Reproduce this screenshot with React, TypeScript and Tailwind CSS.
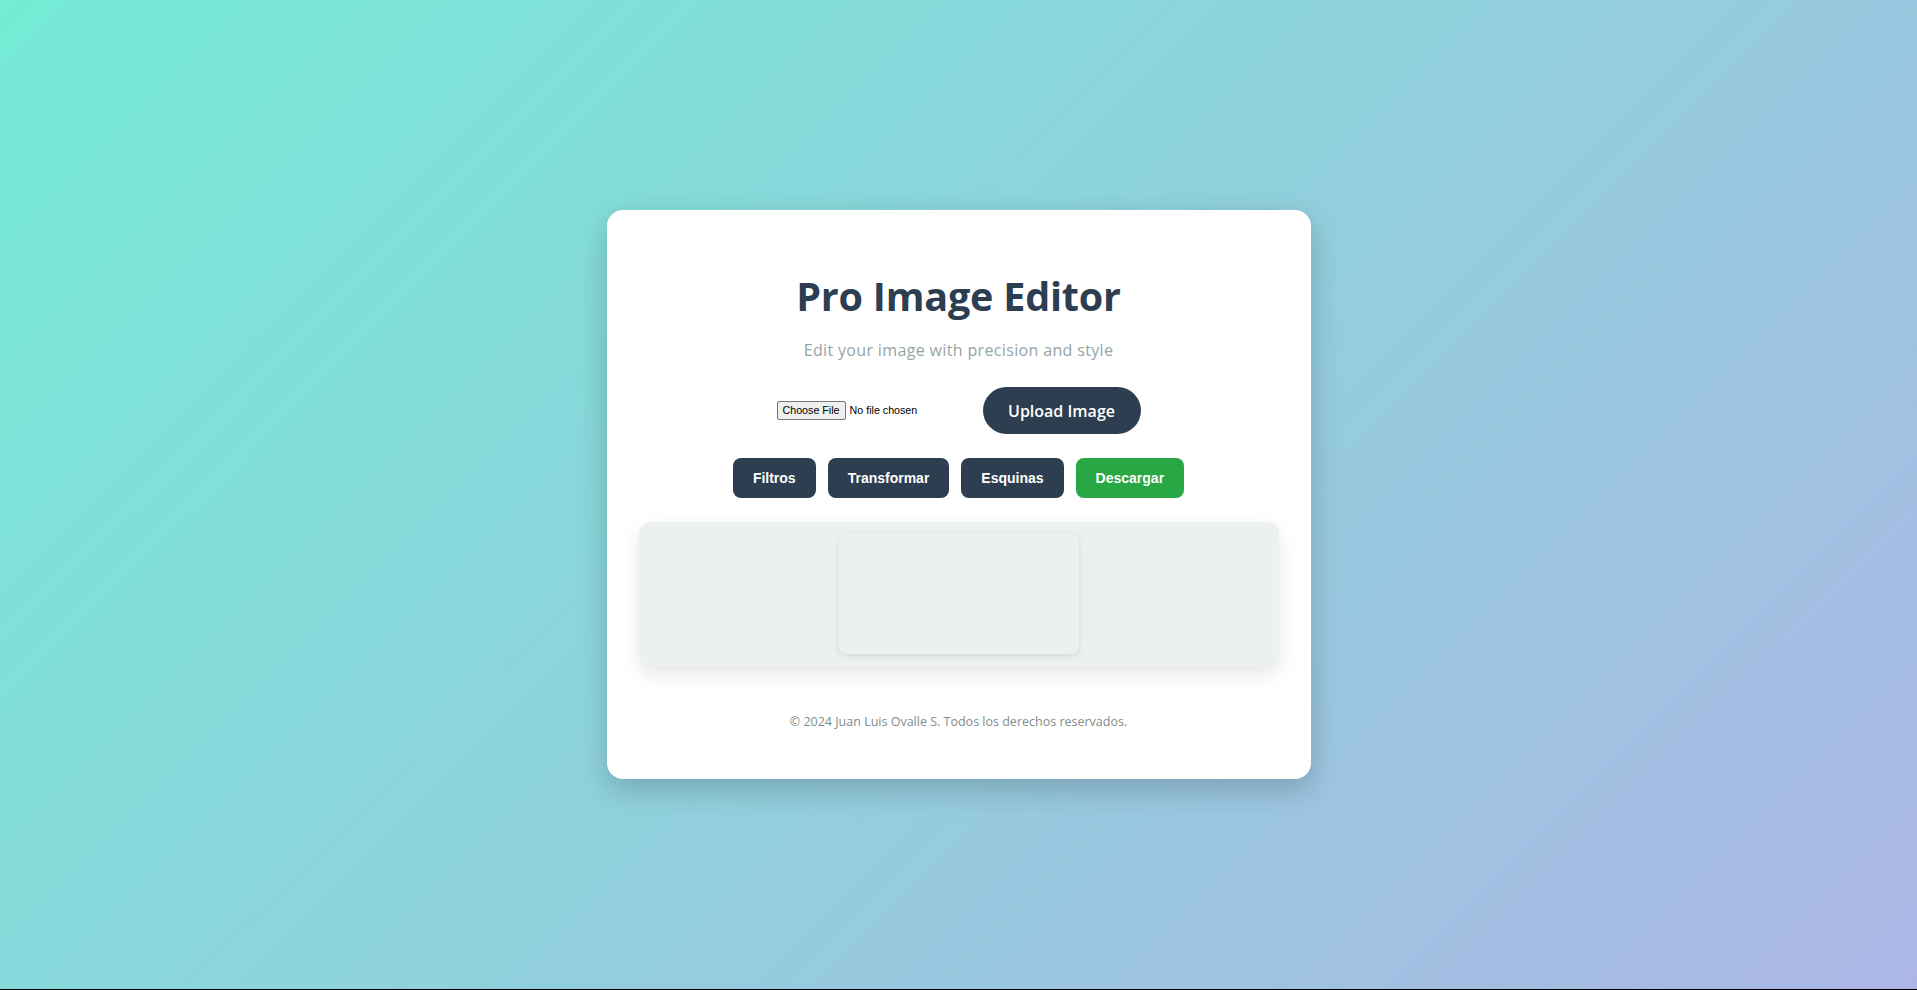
import React, { useState } from 'react';

const tools = ['Filtros', 'Transformar', 'Esquinas'];

export default function App() {
  const [fileName, setFileName] = useState<string | null>(null);

  return (
    <div className="h-[990px] bg-black">
      <div className="h-[989px] flex items-center justify-center bg-[linear-gradient(135deg,#74ebd5_0%,#acb6e5_100%)] font-['Open_Sans',sans-serif]">
        <div className="w-[704px] bg-white rounded-2xl p-8 text-center shadow-[0_10px_30px_rgba(0,0,0,0.2)]">
          {/* Header */}
          <h1 className="mt-[30px] text-[39.5px] leading-[48px] font-bold text-[#2c3e50] tracking-[-0.2px]">
            Pro Image Editor
          </h1>
          <p className="mt-[18px] text-[16px] leading-6 text-[#95a5a6] tracking-[0.35px]">
            Edit your image with precision and style
          </p>

          {/* Upload */}
          <div className="mt-[25px] flex items-center justify-center gap-5">
            <input
              type="file"
              accept="image/*"
              onChange={(e) => setFileName(e.target.files?.[0]?.name ?? null)}
              className="w-[186px] text-left text-[10.7px] text-black font-['Liberation_Sans',Arial,sans-serif] file:mr-1 file:border file:border-[#767676] file:bg-[#efefef] file:rounded-[2px] file:px-[5px] file:py-0 file:text-black"
              title={fileName ?? 'No file chosen'}
            />
            <button className="h-[47px] w-[158px] rounded-full bg-[#2c3e50] text-white text-[16px] font-semibold">
              Upload Image
            </button>
          </div>

          {/* Toolbar */}
          <div className="mt-6 flex justify-center gap-3 font-['Liberation_Sans',Arial,sans-serif]">
            {tools.map(t => (
              <button key={t} className="h-10 px-5 rounded-lg bg-[#2c3e50] text-white text-[14px] font-bold">
                {t}
              </button>
            ))}
            <button className="h-10 px-5 rounded-lg bg-[#28a745] text-white text-[14px] font-bold">
              Descargar
            </button>
          </div>

          {/* Canvas area */}
          <div className="mt-6 bg-[#ecf0f1] rounded-xl py-3 flex justify-center shadow-[0_8px_20px_rgba(0,0,0,0.1)]">
            <div className="w-[240px] h-[120px] bg-[#ecf0f1] rounded-lg shadow-[0_2px_6px_rgba(0,0,0,0.1)]" />
          </div>

          {/* Footer */}
          <p className="mt-[46px] mb-[15px] text-[12.5px] leading-5 text-[#7f8c8d]">
            © 2024 Juan Luis Ovalle S. Todos los derechos reservados.
          </p>
        </div>
      </div>
    </div>
  );
}
